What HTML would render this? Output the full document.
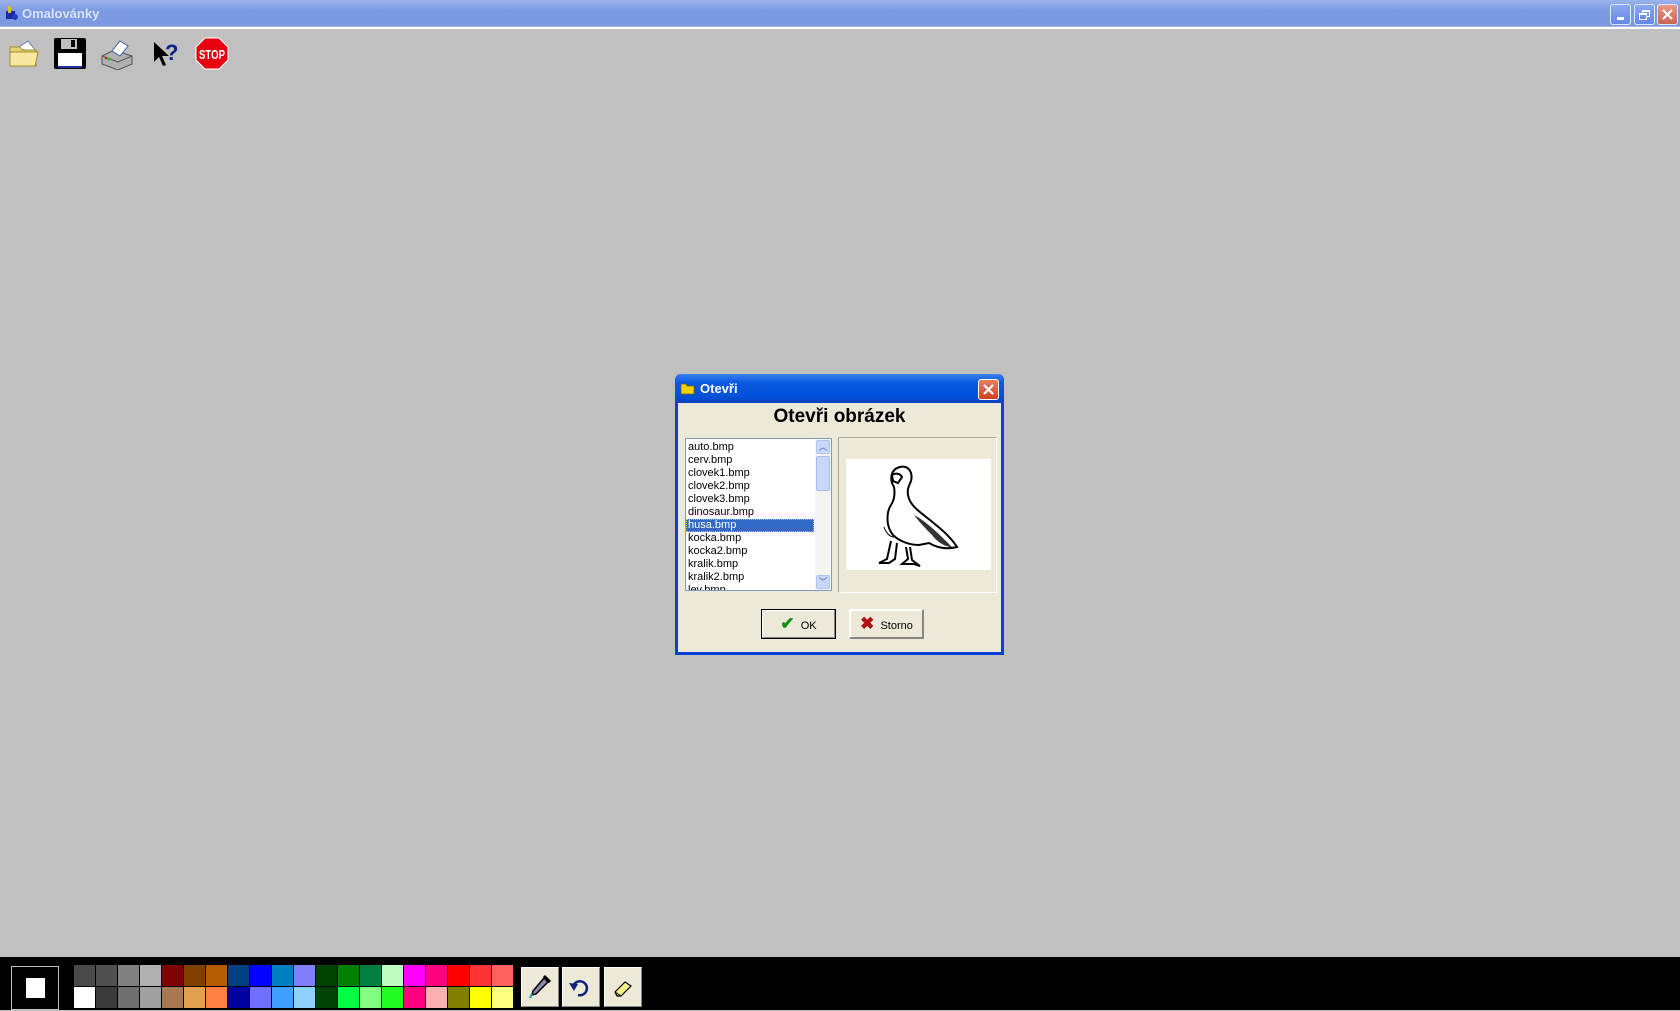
<!DOCTYPE html>
<html><head><meta charset="utf-8"><style>
*{margin:0;padding:0;box-sizing:border-box}
body{width:1680px;height:1010px;background:#c0c0c0;position:relative;overflow:hidden;font-family:"Liberation Sans",sans-serif}
.abs{position:absolute}
#title{left:0;top:0;width:1680px;height:27px;background:linear-gradient(#9bb3ec,#7d9be2 40%,#7b98e0);border-bottom:1px solid #a8b8e0}
#title span{position:absolute;left:22px;top:6px;color:#d8e2f8;font-weight:bold;font-size:13px}
#sep{left:0;top:27px;width:1680px;height:2px;background:#fff}
.wb{top:4px;width:21px;height:21px;border:1px solid #e0e8ff;border-radius:3px;background:linear-gradient(#8aa8f0,#6688e0)}
#bar{left:0;top:957px;width:1680px;height:53px;background:#000}
.sw{position:absolute;width:21px;height:21px}
.tb{top:967px;width:38px;height:40px;background:#ece9d8;border:1px solid #fff;border-right-color:#888;border-bottom-color:#888}
#dlg{left:675px;top:374px;width:329px;height:281px;background:#ece9d8;border:3px solid #0a3fd8;border-top:none;border-radius:6px 6px 0 0}
#dt{left:675px;top:374px;width:329px;height:29px;background:linear-gradient(#3a80f5,#0a5ae0 30%,#0050d8 80%,#0a40c0);border-radius:7px 7px 0 0}
#dt span{position:absolute;left:25px;top:7px;color:#fff;font-weight:bold;font-size:13px}
#lb{left:685px;top:438px;width:147px;height:153px;background:#fff;border:1px solid #7f9db9;overflow:hidden;padding-top:2px}
#lb div{font-size:11px;height:13px;line-height:13px;padding-left:2px;color:#000}
.btn{height:30px;width:75px;background:#ece9d8;border:1px solid #000;box-shadow:inset -1px -1px #888,inset 1px 1px #fff;font-size:11px;text-align:center;line-height:28px}
</style></head><body>
<div id="title" class="abs"><svg class="abs" style="left:3px;top:5px" width="16" height="16"><rect x="3" y="6" width="9" height="8" fill="#1a2aa0"/><rect x="5" y="1" width="3" height="7" fill="#e0c020"/><circle cx="12" cy="12" r="3" fill="#2040c0"/></svg><span>Omalovánky</span></div>
<div id="sep" class="abs"></div>
<div class="abs wb" style="left:1610px"><div class="abs" style="left:6px;top:12px;width:7px;height:3px;background:#fff"></div></div>
<div class="abs wb" style="left:1634px"><div class="abs" style="left:7px;top:5px;width:8px;height:7px;border:1px solid #fff;border-top-width:2px"></div><div class="abs" style="left:4px;top:8px;width:8px;height:7px;border:1px solid #fff;border-top-width:2px;background:#6f8fe5"></div></div>
<div class="abs wb" style="left:1657px;background:linear-gradient(#e89a8a,#c86450)"><svg width="19" height="19"><path d="M5 5L14 14M14 5L5 14" stroke="#fff" stroke-width="2"/></svg></div>

<svg class="abs" style="left:8px;top:37px" width="34" height="32"><path d="M8 12l12-8 8 10z" fill="#fff" stroke="#6a7ab0"/><path d="M2 10h10l2 3h14v16H2z" fill="#e8d070" stroke="#a09030"/><path d="M2 15h28l-3 14H2z" fill="#f8e8a0" stroke="#a09030"/></svg>
<svg class="abs" style="left:53px;top:37px" width="34" height="33"><rect x="1" y="1" width="32" height="31" rx="2" fill="#000"/><rect x="8" y="2" width="16" height="10" fill="#c0c0c0"/><rect x="18" y="3" width="4" height="7" fill="#000"/><rect x="5" y="16" width="24" height="14" fill="#fff"/><rect x="5" y="29" width="24" height="2" fill="#2030a0"/></svg>
<svg class="abs" style="left:100px;top:38px" width="34" height="32"><path d="M2 18l12-6 18 6v8l-14 6-16-6z" fill="#b0b0b0" stroke="#555"/><path d="M2 18l16 6 14-6" fill="none" stroke="#555"/><path d="M12 13l8-10 8 5-8 10z" fill="#fff" stroke="#4060a0"/><circle cx="9" cy="21" r="1.5" fill="#20c020"/><circle cx="6" cy="20" r="1.3" fill="#e02020"/></svg>
<svg class="abs" style="left:152px;top:38px" width="28" height="32"><path d="M2 4v20l5-5 4 9 3-1-4-9h7z" fill="#000"/><text x="13" y="22" font-family="Liberation Sans" font-weight="bold" font-size="22" fill="#10208a">?</text></svg>
<svg class="abs" style="left:195px;top:37px" width="34" height="33"><path d="M10 1h14l9 9v13l-9 9H10l-9-9V10z" fill="#e80010" stroke="#fff" stroke-width="1"/><text x="17" y="22" text-anchor="middle" font-family="Liberation Sans" font-weight="bold" font-size="13" fill="#fff" textLength="26" lengthAdjust="spacingAndGlyphs">STOP</text></svg>

<div id="dlg" class="abs"></div>
<div id="dt" class="abs"><svg class="abs" style="left:5px;top:7px" width="16" height="14"><path d="M1 3h5l1 2h7v8H1z" fill="#f0d000" stroke="#806000" stroke-width=".7"/></svg><span>Otevři</span>
<div class="abs" style="left:303px;top:5px;width:21px;height:21px;border:1px solid #fff;border-radius:3px;background:linear-gradient(#e88060,#d04020)"><svg width="19" height="19"><path d="M5 5L14 14M14 5L5 14" stroke="#fff" stroke-width="2.2"/></svg></div></div>
<div class="abs" style="left:675px;top:406px;width:329px;text-align:center;font-weight:bold;font-size:19px">Otevři obrázek</div>
<div id="lb" class="abs">
<div>auto.bmp</div><div>cerv.bmp</div><div>clovek1.bmp</div><div>clovek2.bmp</div><div>clovek3.bmp</div><div>dinosaur.bmp</div>
<div style="background:#316ac5;color:#fff;outline:1px dotted #e0c040;outline-offset:-1px;width:128px">husa.bmp</div>
<div>kocka.bmp</div><div>kocka2.bmp</div><div>kralik.bmp</div><div>kralik2.bmp</div><div>lev.bmp</div>
<div class="abs" style="right:0;top:0;width:16px;height:151px;background:#f4f4f0"></div>
<div class="abs" style="right:1px;top:1px;width:14px;height:14px;background:#c8d8fc;border:1px solid #b0c4f0;border-radius:2px;font-size:9px;text-align:center;line-height:12px;color:#4060a0;padding:0">︿</div>
<div class="abs" style="right:1px;top:17px;width:14px;height:35px;background:#c8d8fc;border:1px solid #a8bcf0;border-radius:2px;padding:0"></div>
<div class="abs" style="right:1px;bottom:1px;width:14px;height:14px;background:#c8d8fc;border:1px solid #b0c4f0;border-radius:2px;font-size:9px;text-align:center;line-height:12px;color:#4060a0;padding:0">﹀</div>
</div>
<div class="abs" style="left:838px;top:437px;width:159px;height:156px;border:1px solid #fff;border-top-color:#aca899;border-left-color:#aca899"></div>
<svg class="abs" style="left:846px;top:459px" width="145" height="111"><rect width="145" height="111" fill="#fff"/>
<g fill="none" stroke="#000" stroke-width="2">
<path d="M48 28c-5-8-3-18 6-20 9-2 13 6 11 14-2 5-4 8-3 14 2 12 14 18 28 30 10 8 16 14 21 22-8 2-18 2-28-4l-10 2c-10 0-20-4-26-10-8-10-6-24-2-30 4-6 4-12 3-18z"/>
<path d="M46 16c3-2 8-2 10 2l-4 6-5-2z"/>
<path d="M45 82l-4 18-8 4h10l6-4 2-16"/>
<path d="M60 88l2 12-6 5h12l6 2-8-6-2-13"/>
</g>
<path d="M68 56c12 6 26 20 38 32-6 0-14-4-20-12-6-6-12-12-18-20z" fill="#000" opacity=".8"/>
<path d="M38 68c2 6 6 10 10 10" stroke="#000" fill="none"/></svg>
<div class="abs btn" style="left:761px;top:609px"><span style="color:#109010;font-weight:bold;font-size:17px">✔</span>&nbsp; OK</div>
<div class="abs btn" style="left:849px;top:609px;border-color:#fff #888 #888 #fff"><span style="color:#b01010;font-weight:bold;font-size:17px">✖</span>&nbsp; Storno</div>

<div id="bar" class="abs"></div>
<div class="abs" style="left:11px;top:966px;width:48px;height:44px;border:1px solid #c0c0c0;background:#000"></div>
<div class="abs" style="left:26px;top:978px;width:19px;height:20px;background:#fff"></div>
<div id="pal"></div>
<div class="abs tb" style="left:521px"><svg width="36" height="38"><path d="M22 10l4 4-12 12-4 1 1-4z" fill="#88a" stroke="#000" stroke-width="1.5"/><path d="M22 8l6 6" stroke="#000" stroke-width="3"/><path d="M10 26l-2 4" stroke="#10a0a0" stroke-width="2"/></svg></div>
<div class="abs tb" style="left:562px"><svg width="36" height="38"><path d="M10 19a7 7 0 1 1 5 8" fill="none" stroke="#102080" stroke-width="2.5"/><path d="M6 15l5 8 4-7z" fill="#102080"/></svg></div>
<div class="abs tb" style="left:604px"><svg width="36" height="38"><path d="M10 24l10-10 6 4-10 10h-4z" fill="#f8f080" stroke="#000" stroke-width="1.2"/><path d="M10 24l6 4" stroke="#000"/></svg></div>
<script>
var r1=["#4a4a4a","#505050","#808080","#b0b0b0","#800000","#804000","#b85c00","#004080","#0000ff","#0080c0","#8080ff","#004000","#008000","#008040","#c0ffc0","#ff00ff","#ff0080","#ff0000","#ff3333","#ff6060"];
var r2=["#ffffff","#3a3a3a","#707070","#a0a0a0","#a87850","#e0a050","#ff8040","#0000a0","#7070ff","#40a0ff","#90d0ff","#004000","#00ff40","#80ff80","#20ff20","#ff0080","#ffb0b0","#808000","#ffff00","#ffff80"];
var h="";for(var i=0;i<20;i++){h+='<div class="sw" style="left:'+(74+i*22)+'px;top:965px;background:'+r1[i]+'"></div><div class="sw" style="left:'+(74+i*22)+'px;top:987px;background:'+r2[i]+'"></div>';}
document.getElementById("pal").innerHTML=h;
</script>
</body></html>
